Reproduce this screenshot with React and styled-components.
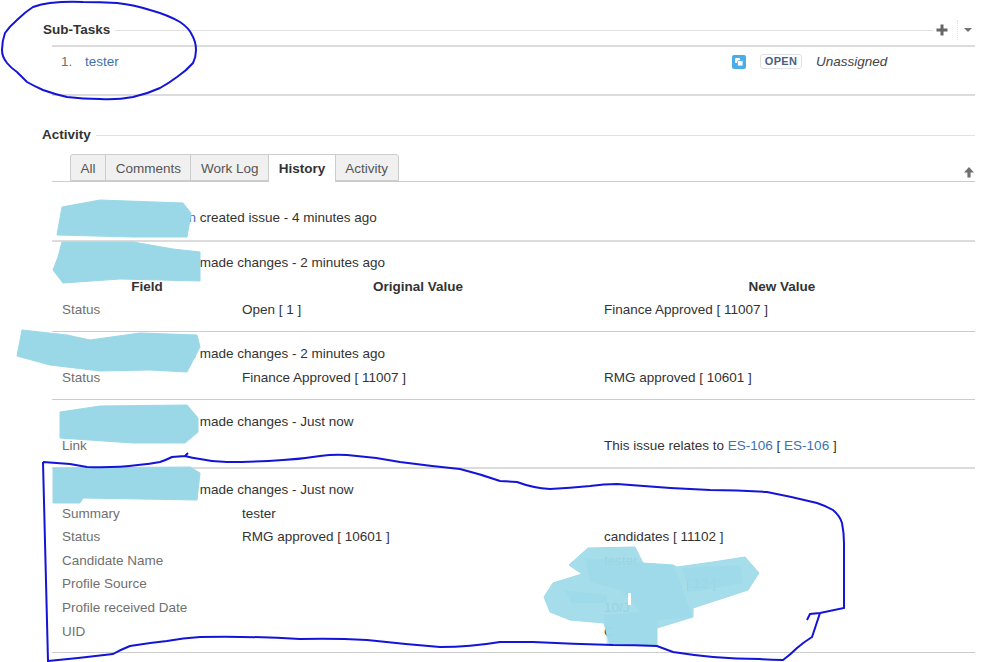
import React from 'react'
import styled, { createGlobalStyle } from 'styled-components'

const GlobalStyle = createGlobalStyle`
  html, body {
    margin: 0;
    padding: 0;
    background: #fff;
  }
  body {
    font-family: "Liberation Sans", Arial, sans-serif;
    font-size: 13.5px;
    line-height: 20px;
    color: #333;
  }
`

const tabs = ['All', 'Comments', 'Work Log', 'History', 'Activity']

const blobs = [
  '62,207 100,200 183,203 191,213 187,237 133,237 57,235',
  '62,242 133,242 173,249 200,252 200,281 120,279 63,283 53,270 58,257',
  '22,330 67,335 90,340 140,333 197,335 200,347 187,372 150,370 100,371 50,365 17,356',
  '60,412 100,406 187,405 198,418 198,432 185,443 133,443 60,438',
  '53,468 190,467 200,473 197,500 83,498 80,503 53,503',
]

const bigBlob = '588,548 635,547 643,563 673,565 677,567 713,562 745,557 759,573 748,590 693,608 693,617 657,628 657,645 610,645 604,623 570,620 550,612 544,597 553,583 582,574 569,565'
const blobCores = [
  '585,558 645,563 673,565 680,582 692,617 657,620 657,645 607,645 604,615 640,612 630,600 620,590 590,582',
  '682,568 740,565 743,583 703,590 690,592',
  '563,590 572,603 607,603 607,595',
]

const circleOne = 'M83 2 Q100 2 117 3 Q135 5 150 10 Q168 15 180 22 Q189 28 192 35 Q196 42 196 50 Q196 57 193 63 Q186 71 177 77 Q169 83 160 88 Q147 94 133 97 Q117 100 100 99 Q83 99 67 97 Q54 94 43 90 Q34 86 27 82 Q21 76 17 72 Q11 68 7 63 Q2 57 2 50 Q2 41 5 33 Q10 26 17 20 Q25 12 33 7 Q41 4 50 3 Q67 1 83 2 Z'
const circleTwo = 'M43 462 L70 464 L87 467 Q115 468 138 465 Q150 464 160 462 Q166 460 172 457 L185 456 L188 453 M185 456 Q192 458 200 459 Q213 462 227 462 Q255 462 283 460 Q302 459 320 456 Q334 454 347 455 Q374 457 400 462 Q430 466 460 469 Q480 474 500 481 L517 482 Q533 488 550 489 Q570 488 590 486 Q604 484 617 484 Q664 488 710 490 Q738 490 767 492 Q793 497 817 503 Q826 506 833 510 Q840 516 842 523 Q844 533 844 543 L844 608 L820 613 L810 614 L807 620 M820 613 L812 637 Q804 642 797 648 Q790 655 783 660 Q771 660 760 659 Q736 659 713 657 Q692 655 673 652 Q665 649 657 646 Q635 645 613 645 Q573 644 533 642 L500 642 Q470 647 440 647 Q403 644 367 640 Q333 638 300 639 Q250 636 200 637 Q183 638 167 641 Q148 643 130 646 Q120 650 113 654 Q80 658 48 661 L43 462'

export default function App() {
  return (
    <Page>
      <GlobalStyle />
      <Module>
        <ModuleHeader>
          <ModuleTitle>Sub-Tasks</ModuleTitle>
          <HeaderLine />
          <PlusIcon width="12" height="12" viewBox="0 0 12 12">
            <path d="M4.5 0.5h3v4h4v3h-4v4h-3v-4h-4v-3h4z" />
          </PlusIcon>
          <DottedDivider />
          <Caret />
        </ModuleHeader>
        <SubTaskTable>
          <SubTaskRow>
            <RowNumber>1.</RowNumber>
            <IssueLink href="#">tester</IssueLink>
            <TypeIcon width="14" height="14" viewBox="0 0 14 14">
              <rect width="14" height="14" rx="2" fill="#4bade8" />
              <rect x="3" y="3" width="5" height="5" rx="1" fill="#fff" />
              <rect x="5.5" y="5.5" width="5.5" height="5.5" rx="1" fill="#fff" stroke="#4bade8" strokeWidth="0.8" />
            </TypeIcon>
            <Lozenge>OPEN</Lozenge>
            <Assignee>Unassigned</Assignee>
          </SubTaskRow>
        </SubTaskTable>
      </Module>

      <ActivityModule>
        <ModuleHeader>
          <ActivityTitle>Activity</ActivityTitle>
          <HeaderLine />
        </ModuleHeader>
        <TabBar>
          {tabs.map((t) => (
            <Tab key={t} $active={t === 'History'}>{t}</Tab>
          ))}
          <SortIcon width="12" height="12" viewBox="0 0 12 12">
            <path d="M6 1L11 6.5H7.6V11.5H4.4V6.5H1z" />
          </SortIcon>
        </TabBar>

        <HistoryGroup $pt={24.2} $pb={10.2} $thick>
          <Action><Author>n</Author> created issue - 4 minutes ago</Action>
        </HistoryGroup>

        <HistoryGroup $pt={9.2} $pb={9}>
          <Action><Author /> made changes - 2 minutes ago</Action>
          <ChangeRow>
            <HeadCell>Field</HeadCell>
            <HeadCell>Original Value</HeadCell>
            <HeadCell $last>New Value</HeadCell>
          </ChangeRow>
          <ChangeRow>
            <FieldCell>Status</FieldCell>
            <ValueCell>Open [ 1 ]</ValueCell>
            <ValueCell>Finance Approved [ 11007 ]</ValueCell>
          </ChangeRow>
        </HistoryGroup>

        <HistoryGroup $pt={10.2} $pb={9.6}>
          <Action><Author>n</Author> made changes - 2 minutes ago</Action>
          <ChangeRow>
            <FieldCell>Status</FieldCell>
            <ValueCell>Finance Approved [ 11007 ]</ValueCell>
            <ValueCell>RMG approved [ 10601 ]</ValueCell>
          </ChangeRow>
        </HistoryGroup>

        <HistoryGroup $pt={10.2} $pb={9.6} $thick>
          <Action><Author /> made changes - Just now</Action>
          <ChangeRow>
            <FieldCell>Link</FieldCell>
            <ValueCell />
            <ValueCell>
              This issue relates to <IssueLink href="#">ES-106</IssueLink> [ <IssueLink href="#">ES-106</IssueLink> ]
            </ValueCell>
          </ChangeRow>
        </HistoryGroup>

        <HistoryGroup $pt={9.2} $pb={8.6}>
          <Action><Author /> made changes - Just now</Action>
          <ChangeRow>
            <FieldCell>Summary</FieldCell>
            <ValueCell>tester</ValueCell>
            <ValueCell />
          </ChangeRow>
          <ChangeRow>
            <FieldCell>Status</FieldCell>
            <ValueCell>RMG approved [ 10601 ]</ValueCell>
            <ValueCell>candidates [ 11102 ]</ValueCell>
          </ChangeRow>
          <ChangeRow>
            <FieldCell>Candidate Name</FieldCell>
            <ValueCell />
            <ValueCell>tester</ValueCell>
          </ChangeRow>
          <ChangeRow>
            <FieldCell>Profile Source</FieldCell>
            <ValueCell />
            <ValueCell $indent={82}>[ 12 ]</ValueCell>
          </ChangeRow>
          <ChangeRow>
            <FieldCell>Profile received Date</FieldCell>
            <ValueCell />
            <ValueCell>10/J</ValueCell>
          </ChangeRow>
          <ChangeRow>
            <FieldCell>UID</FieldCell>
            <ValueCell />
            <ValueCell>C</ValueCell>
          </ChangeRow>
        </HistoryGroup>
      </ActivityModule>

      {/* hand drawn redaction marks on top of the screenshot */}
      <Scribbles width="999" height="662" viewBox="0 0 999 662">
        {blobs.map((points) => (
          <polygon key={points} points={points} fill="#9ad8e8" stroke="#9ad8e8" strokeLinejoin="round" />
        ))}
        <polygon points={bigBlob} fill="#a0dbe9" fillOpacity="0.94" stroke="#a0dbe9" strokeLinejoin="round" />
        {blobCores.map((points) => (
          <polygon key={points} points={points} fill="#9ad8e8" fillOpacity="0.6" />
        ))}
        <rect x="628" y="593" width="3" height="12" fill="#fff" />
        <path d={circleOne} fill="none" stroke="#1414d8" strokeWidth="2" />
        <path d={circleTwo} fill="none" stroke="#1414d8" strokeWidth="2" />
      </Scribbles>
    </Page>
  )
}

const Page = styled.div`
  position: relative;
  width: 999px;
  height: 662px;
  overflow: hidden;
  background: #fff;
  box-sizing: border-box;
  padding: 20px 24px 0 43px;
`

const Module = styled.section`
  height: 76px;
`

const ActivityModule = styled.section`
  margin-top: 29px;
`

const ModuleHeader = styled.div`
  display: flex;
  align-items: center;
  height: 20px;
`

const ModuleTitle = styled.h3`
  margin: 0 5px 0 0;
  font-size: 13.5px;
  line-height: 20px;
  font-weight: bold;
  color: #333;
`

const ActivityTitle = styled(ModuleTitle)`
  margin-left: -1px;
`

const HeaderLine = styled.div`
  flex: 1;
  height: 1px;
  background: #e2e2e2;
`

const PlusIcon = styled.svg`
  margin-left: 3px;
  fill: #666;
  flex: none;
`

const DottedDivider = styled.div`
  width: 0;
  height: 20px;
  margin: 0 6px 0 9px;
  border-left: 1px dotted #e4e4e4;
`

const Caret = styled.div`
  width: 0;
  height: 0;
  margin-right: 3px;
  border-left: 4px solid transparent;
  border-right: 4px solid transparent;
  border-top: 4px solid #707070;
`

const SubTaskTable = styled.div`
  margin: 5px 0 0 9px;
  height: 47px;
  border-top: 2px solid #dcdcdc;
  border-bottom: 2px solid #dcdcdc;
`

const SubTaskRow = styled.div`
  display: flex;
  align-items: center;
  height: 29px;
`

const RowNumber = styled.span`
  width: 24px;
  margin-left: 9px;
  color: #707070;
`

const IssueLink = styled.a`
  color: #3b73af;
  text-decoration: none;
`

const TypeIcon = styled.svg`
  margin-left: auto;
  flex: none;
`

const Lozenge = styled.span`
  box-sizing: border-box;
  width: 42px;
  height: 15px;
  margin-left: 14px;
  border: 1px solid #dfe1e6;
  border-radius: 3px;
  font-size: 11px;
  line-height: 13px;
  font-weight: bold;
  letter-spacing: 0.3px;
  text-align: center;
  color: #4a5f80;
`

const Assignee = styled.em`
  width: 159px;
  margin-left: 14px;
  color: #444;
`

const TabBar = styled.div`
  position: relative;
  display: flex;
  align-items: flex-end;
  height: 27px;
  margin: 9px 0 0 9px;
  padding-left: 18px;
  border-bottom: 1px solid #ccc;
`

const Tab = styled.div`
  box-sizing: border-box;
  height: ${(p) => (p.$active ? '28px' : '27px')};
  margin-bottom: ${(p) => (p.$active ? '-1px' : '0')};
  padding: 0 9.55px;
  margin-right: -1px;
  border: 1px solid #ccc;
  border-bottom: ${(p) => (p.$active ? 'none' : '1px solid #ccc')};
  background: ${(p) => (p.$active ? '#fff' : '#f0f0f0')};
  font-weight: ${(p) => (p.$active ? 'bold' : 'normal')};
  line-height: 27px;
  color: ${(p) => (p.$active ? '#333' : '#555')};
  &:first-child { border-top-left-radius: 3px; }
  &:nth-child(5) { border-top-right-radius: 3px; }
`

const SortIcon = styled.svg`
  position: absolute;
  right: 0;
  bottom: 3px;
  fill: #707070;
`

const HistoryGroup = styled.div`
  margin-left: 9px;
  padding: ${(p) => p.$pt}px 0 ${(p) => p.$pb}px;
  border-bottom: ${(p) => (p.$thick ? '2px solid #dcdcdc' : '1px solid #ccc')};
`

const Action = styled.div`
  display: flex;
  white-space: pre;
  height: 23.6px;
  line-height: 24px;
  color: #333;
`

const Author = styled.span`
  width: 144px;
  text-align: right;
  color: #3b73af;
`

const ChangeRow = styled.div`
  display: grid;
  grid-template-columns: 180px 362px 1fr;
  height: 23.6px;
  line-height: 24px;
`

const HeadCell = styled.div`
  padding-left: 10px;
  padding-right: ${(p) => (p.$last ? '15px' : '0')};
  text-align: center;
  font-weight: bold;
  color: #333;
`

const FieldCell = styled.div`
  padding-left: 10px;
  color: #707070;
`

const ValueCell = styled.div`
  padding-left: ${(p) => 10 + (p.$indent || 0)}px;
  color: #333;
`

const Scribbles = styled.svg`
  position: absolute;
  top: 0;
  left: 0;
  pointer-events: none;
`
